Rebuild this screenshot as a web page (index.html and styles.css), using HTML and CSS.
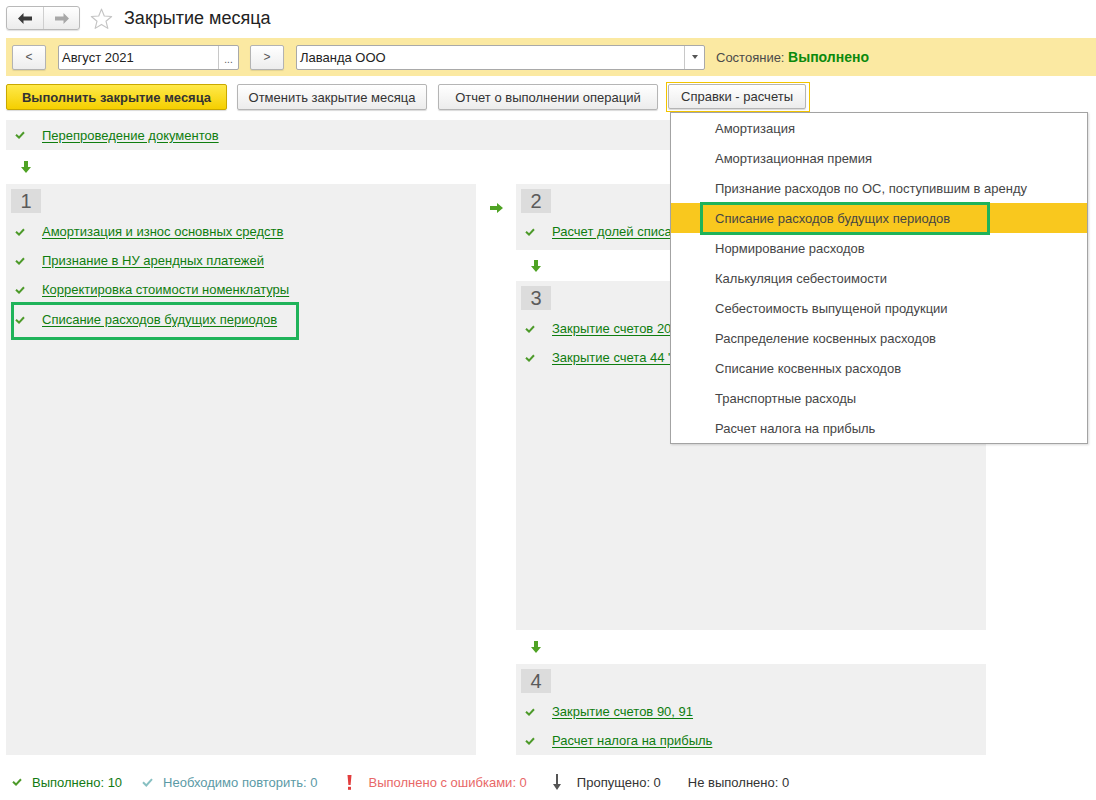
FILE: index.html
```html
<!DOCTYPE html>
<html lang="ru">
<head>
<meta charset="utf-8">
<title>Закрытие месяца</title>
<link rel="stylesheet" href="styles.css">
</head>
<body>
<div class="page">
  <header class="titlebar">
    <div class="nav">
      <button class="nav-btn"><svg width="14" height="11" viewBox="0 0 14 11"><path d="M0 5.5 L5.5 0 V3.5 H14 V7.5 H5.5 V11 Z" fill="#3a3a3a"/></svg></button>
      <button class="nav-btn"><svg width="14" height="11" viewBox="0 0 14 11"><path d="M14 5.5 L8.5 0 V3.5 H0 V7.5 H8.5 V11 Z" fill="#a8a8a8"/></svg></button>
    </div>
    <svg class="star" width="23" height="22" viewBox="0 0 24 23"><path d="M12 1.2 L14.9 8.4 L22.6 8.9 L16.7 13.8 L18.6 21.3 L12 17.2 L5.4 21.3 L7.3 13.8 L1.4 8.9 L9.1 8.4 Z" fill="none" stroke="#c4c4c4" stroke-width="1.2" stroke-linejoin="round"/></svg>
    <h1 class="title">Закрытие месяца</h1>
  </header>

  <div class="params">
    <button class="small-btn">&lt;</button>
    <div class="field field-date"><span class="field-text">Август 2021</span><span class="field-btn">...</span></div>
    <button class="small-btn">&gt;</button>
    <div class="field field-org"><span class="field-text">Лаванда ООО</span><span class="field-btn drop"><svg width="6" height="4" viewBox="0 0 6 4"><path d="M0 0 H6 L3 4 Z" fill="#555"/></svg></span></div>
    <div class="state">Состояние: <b>Выполнено</b></div>
  </div>

  <div class="toolbar">
    <button class="btn btn-primary">Выполнить закрытие месяца</button>
    <button class="btn btn-cancel">Отменить закрытие месяца</button>
    <button class="btn btn-report">Отчет о выполнении операций</button>
    <div class="menu-wrap">
      <button class="btn btn-menu">Справки - расчеты</button>
      <ul class="dropdown">
        <li>Амортизация</li>
        <li>Амортизационная премия</li>
        <li>Признание расходов по ОС, поступившим в аренду</li>
        <li class="active"><span class="mark">Списание расходов будущих периодов</span></li>
        <li>Нормирование расходов</li>
        <li>Калькуляция себестоимости</li>
        <li>Себестоимость выпущеной продукции</li>
        <li>Распределение косвенных расходов</li>
        <li>Списание косвенных расходов</li>
        <li>Транспортные расходы</li>
        <li>Расчет налога на прибыль</li>
      </ul>
    </div>
  </div>

  <div class="work">
    <div class="row-top">
      <div class="item"><svg class="check" width="10" height="8" viewBox="0 0 10 8"><path d="M1 3.8 L4 6.6 L9 1.2" fill="none" stroke="#4d9a2a" stroke-width="2"/></svg><a href="#">Перепроведение документов</a></div>
    </div>
    <div class="arrow-row"><svg width="10" height="12" viewBox="0 0 10 12"><path d="M3 0 H7 V6 H10 L5 12 L0 6 H3 Z" fill="#4fa324"/></svg></div>

    <div class="columns">
      <div class="section s1">
        <div class="num">1</div>
        <div class="item"><svg class="check" width="10" height="8" viewBox="0 0 10 8"><path d="M1 3.8 L4 6.6 L9 1.2" fill="none" stroke="#4d9a2a" stroke-width="2"/></svg><a href="#">Амортизация и износ основных средств</a></div>
        <div class="item"><svg class="check" width="10" height="8" viewBox="0 0 10 8"><path d="M1 3.8 L4 6.6 L9 1.2" fill="none" stroke="#4d9a2a" stroke-width="2"/></svg><a href="#">Признание в НУ арендных платежей</a></div>
        <div class="item"><svg class="check" width="10" height="8" viewBox="0 0 10 8"><path d="M1 3.8 L4 6.6 L9 1.2" fill="none" stroke="#4d9a2a" stroke-width="2"/></svg><a href="#">Корректировка стоимости номенклатуры</a></div>
        <div class="item item-marked"><svg class="check" width="10" height="8" viewBox="0 0 10 8"><path d="M1 3.8 L4 6.6 L9 1.2" fill="none" stroke="#4d9a2a" stroke-width="2"/></svg><a href="#">Списание расходов будущих периодов</a></div>
      </div>

      <div class="gutter"><svg width="13" height="10" viewBox="0 0 13 10"><path d="M0 3 H7 V0 L13 5 L7 10 V7 H0 Z" fill="#4fa324"/></svg></div>

      <div class="col-right">
        <div class="section s2">
          <div class="num">2</div>
          <div class="item"><svg class="check" width="10" height="8" viewBox="0 0 10 8"><path d="M1 3.8 L4 6.6 L9 1.2" fill="none" stroke="#4d9a2a" stroke-width="2"/></svg><a href="#">Расчет долей списания косвенных расходов</a></div>
        </div>
        <div class="arrow-row short"><svg width="10" height="12" viewBox="0 0 10 12"><path d="M3 0 H7 V6 H10 L5 12 L0 6 H3 Z" fill="#4fa324"/></svg></div>
        <div class="section s3">
          <div class="num">3</div>
          <div class="item"><svg class="check" width="10" height="8" viewBox="0 0 10 8"><path d="M1 3.8 L4 6.6 L9 1.2" fill="none" stroke="#4d9a2a" stroke-width="2"/></svg><a href="#">Закрытие счетов 20, 23, 25, 26</a></div>
          <div class="item"><svg class="check" width="10" height="8" viewBox="0 0 10 8"><path d="M1 3.8 L4 6.6 L9 1.2" fill="none" stroke="#4d9a2a" stroke-width="2"/></svg><a href="#">Закрытие счета 44 "Расходы на продажу"</a></div>
        </div>
        <div class="arrow-row"><svg width="10" height="12" viewBox="0 0 10 12"><path d="M3 0 H7 V6 H10 L5 12 L0 6 H3 Z" fill="#4fa324"/></svg></div>
        <div class="section s4">
          <div class="num">4</div>
          <div class="item"><svg class="check" width="10" height="8" viewBox="0 0 10 8"><path d="M1 3.8 L4 6.6 L9 1.2" fill="none" stroke="#4d9a2a" stroke-width="2"/></svg><a href="#">Закрытие счетов 90, 91</a></div>
          <div class="item"><svg class="check" width="10" height="8" viewBox="0 0 10 8"><path d="M1 3.8 L4 6.6 L9 1.2" fill="none" stroke="#4d9a2a" stroke-width="2"/></svg><a href="#">Расчет налога на прибыль</a></div>
        </div>
      </div>
    </div>
  </div>

  <div class="status">
    <span class="st st-done"><svg width="10" height="8" viewBox="0 0 10 8"><path d="M1 3.8 L4 6.6 L9 1.2" fill="none" stroke="#4d9a2a" stroke-width="2"/></svg>Выполнено: 10</span>
    <span class="st st-repeat"><svg width="11" height="9" viewBox="0 0 11 9"><path d="M1 4.3 L4.3 7.5 L10 1.2" fill="none" stroke="#88c0c2" stroke-width="2"/></svg>Необходимо повторить: 0</span>
    <span class="st st-error"><svg width="5" height="15" viewBox="0 0 5 15"><path d="M0.5 0 H4.5 L3.6 10 H1.4 Z" fill="#e23d3d"/><rect x="1" y="11.8" width="3" height="3" fill="#e23d3d"/></svg>Выполнено с ошибками: 0</span>
    <span class="st st-skip"><svg width="8" height="16" viewBox="0 0 8 16"><path d="M3 0 H5 V10 H8 L4 16 L0 10 H3 Z" fill="#555"/></svg>Пропущено: 0</span>
    <span class="st st-none">Не выполнено: 0</span>
  </div>
</div>
</body>
</html>
```

FILE: styles.css
```css
* { box-sizing: border-box; }

html, body {
  margin: 0;
  padding: 0;
  background: #fff;
}

body {
  font-family: "Liberation Sans", Arial, sans-serif;
  font-size: 13px;
  color: #333;
}

.page {
  width: 1096px;
  height: 800px;
  overflow: hidden;
}

button {
  font-family: inherit;
  font-size: 13px;
  margin: 0;
  cursor: default;
}

/* ---------- title bar ---------- */
.titlebar {
  display: flex;
  align-items: center;
  height: 28px;
  margin-top: 4px;
  padding-left: 6px;
}

.nav {
  display: flex;
  height: 24px;
  border: 1px solid #b9b9b9;
  border-radius: 3px;
  background: linear-gradient(#ffffff, #ececec);
  box-shadow: 0 1px 1px rgba(0,0,0,0.12);
}

.nav-btn {
  width: 36px;
  height: 22px;
  padding: 0;
  border: 0;
  background: transparent;
  display: flex;
  align-items: center;
  justify-content: center;
}

.nav-btn + .nav-btn {
  border-left: 1px solid #cfcfcf;
}

.star {
  margin-left: 10px;
  margin-top: 2px;
}

.title {
  margin: 0 0 0 11px;
  font-size: 18px;
  font-weight: normal;
  color: #222;
  line-height: 24px;
}

/* ---------- params bar ---------- */
.params {
  display: flex;
  align-items: center;
  height: 38px;
  margin: 6px 0 0 6px;
  padding-left: 6px;
  background: #fbe9a2;
}

.small-btn {
  width: 34px;
  height: 25px;
  padding: 0;
  border: 1px solid #b3b3b3;
  border-radius: 2px;
  background: linear-gradient(#ffffff, #ededed);
  color: #555;
  font-size: 12px;
  box-shadow: 0 1px 1px rgba(0,0,0,0.1);
}

.field {
  display: flex;
  height: 25px;
  border: 1px solid #a9a9a9;
  border-radius: 2px;
  background: #fff;
  margin-left: 12px;
  margin-right: 11px;
}

.field-text {
  flex: 1;
  display: flex;
  align-items: center;
  padding-left: 3px;
  color: #222;
}

.field-btn {
  width: 20px;
  display: flex;
  align-items: center;
  justify-content: center;
  border-left: 1px solid #c8c8c8;
  color: #555;
  font-size: 10px;
  padding-top: 4px;
}

.field-btn.drop { padding-top: 0; }

.field-date { width: 181px; }
.field-org { width: 409px; margin-right: 0; }

.state {
  margin-left: 11px;
  color: #4a4a4a;
}

.state b {
  color: #0c8a0c;
  font-size: 14px;
}

/* ---------- toolbar ---------- */
.toolbar {
  display: flex;
  align-items: center;
  height: 34px;
  margin-top: 4px;
  padding-left: 6px;
}

.btn {
  height: 26px;
  padding: 0 10px;
  border: 1px solid #b5b5b5;
  border-radius: 2px;
  background: linear-gradient(#ffffff, #ececec);
  color: #333;
  box-shadow: 0 1px 1px rgba(0,0,0,0.15);
  white-space: nowrap;
}

.btn-primary {
  width: 221px;
  background: linear-gradient(#ffe94a, #f5cf00);
  border-color: #c9a800;
  font-weight: bold;
  color: #333;
}

.btn-cancel { width: 190px; margin-left: 10px; }
.btn-report { width: 220px; margin-left: 11px; }

.menu-wrap {
  position: relative;
  margin-left: 8px;
  padding: 1px 3px 2px 1px;
  border: 1px solid #f2c400;
}

.btn-menu {
  width: 138px;
  height: 25px;
}

.dropdown {
  position: absolute;
  top: 100%;
  left: 3px;
  width: 418px;
  margin: 1px 0 0;
  padding: 0;
  list-style: none;
  background: #fff;
  border: 1px solid #a3a3a3;
  box-shadow: 1px 1px 2px rgba(0,0,0,0.15);
  z-index: 10;
}

.dropdown li {
  height: 30px;
  display: flex;
  align-items: center;
  padding-left: 44px;
  color: #454545;
  white-space: nowrap;
}

.dropdown li.active {
  background: #f9c81e;
  padding-left: 32px;
}

.dropdown .mark {
  display: flex;
  align-items: center;
  width: 284px;
  height: 27px;
  padding-left: 12px;
  outline: 3px solid #1fb35a;
}

/* ---------- work area ---------- */
.work {
  width: 980px;
  margin: 6px 0 0 6px;
}

.row-top {
  height: 30px;
  background: #f0f0f0;
  display: flex;
  align-items: center;
}

.item {
  display: flex;
  align-items: center;
  height: 29px;
  padding-left: 9px;
  white-space: nowrap;
  overflow: hidden;
}

.row-top .item { height: 30px; }

.check {
  flex: none;
  margin-right: 17px;
}

.item a {
  color: #0f7d0f;
  text-decoration: underline;
  text-underline-offset: 2px;
}

.arrow-row {
  height: 34px;
  display: flex;
  align-items: center;
  padding-left: 15px;
}

.arrow-row.short { height: 31px; }

.columns {
  display: flex;
  align-items: stretch;
}

.section {
  background: #f0f0f0;
  padding: 5px 0 0 5px;
}

.s1 { width: 470px; }

.gutter {
  width: 40px;
  display: flex;
  justify-content: center;
  padding-top: 19px;
}

.col-right {
  width: 470px;
  display: flex;
  flex-direction: column;
}

.s2 { padding-bottom: 4px; }
.s3 { height: 349px; }
.s4 { height: 91px; }

.section .item { padding-left: 4px; }

.num {
  width: 30px;
  height: 24px;
  margin-bottom: 4px;
  background: #dcdcdc;
  color: #5a5a5a;
  font-size: 20px;
  line-height: 24px;
  text-align: center;
}

.section .item-marked {
  width: 282px;
  height: 32px;
  margin: 1px 0 0 3px;
  padding: 0 0 3px 1px;
  outline: 3px solid #1fb35a;
  overflow: visible;
}

/* ---------- status ---------- */
.status {
  display: flex;
  align-items: center;
  height: 20px;
  margin-top: 17px;
  padding-left: 12px;
}

.st {
  display: flex;
  align-items: center;
  white-space: nowrap;
}

.st svg { margin-right: 10px; }

.st-done { color: #127a12; }
.st-repeat { color: #5b9aa6; margin-left: 20px; }
.st-error { color: #e86868; margin-left: 30px; }
.st-error svg { margin-right: 16px; }
.st-skip { color: #333; margin-left: 26px; }
.st-skip svg { margin-right: 16px; }
.st-none { color: #333; margin-left: 27px; }
```
